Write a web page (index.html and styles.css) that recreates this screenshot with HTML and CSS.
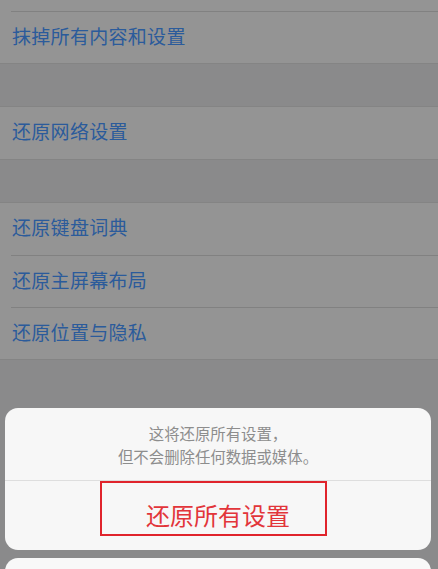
FILE: index.html
```html
<!DOCTYPE html>
<html lang="zh-CN">
<head>
<meta charset="utf-8">
<title>还原</title>
<link rel="stylesheet" href="styles.css">
</head>
<body>
<div class="screen">
  <div class="group">
    <div class="row row-top"></div>
    <div class="row"><span class="label">抹掉所有内容和设置</span></div>
  </div>
  <div class="gap"></div>
  <div class="group">
    <div class="row"><span class="label">还原网络设置</span></div>
  </div>
  <div class="gap"></div>
  <div class="group">
    <div class="row"><span class="label">还原键盘词典</span></div>
    <div class="row"><span class="label">还原主屏幕布局</span></div>
    <div class="row"><span class="label">还原位置与隐私</span></div>
  </div>

  <div class="sheet">
    <div class="card">
      <div class="sheet-msg">这将还原所有设置，<br>但不会删除任何数据或媒体。</div>
      <div class="sheet-btn">
        <span class="destructive">还原所有设置</span>
        <span class="annot"></span>
      </div>
    </div>
    <div class="card cancel"></div>
  </div>
</div>
</body>
</html>
```
FILE: styles.css
```css
html, body {
  margin: 0;
  padding: 0;
  background: #8a8a8b;
}
.screen {
  width: 438px;
  height: 569px;
  overflow: hidden;
  background: #8a8a8b;
  font-family: "Noto Sans CJK SC", "Noto Sans", sans-serif;
}
.group {
  background: #949494;
  border-top: 1px solid #848484;
  border-bottom: 1px solid #848484;
}
.group:first-child {
  border-top: none;
}
.row {
  height: 52px;
  display: flex;
  align-items: center;
  padding-left: 12px;
  position: relative;
}
.row + .row {
  height: 51px;
  border-top: 1px solid transparent;
}
.row + .row::before {
  content: "";
  position: absolute;
  left: 11px;
  right: 0;
  top: -1px;
  height: 1px;
  background: #818181;
}
.row-top {
  height: 11px;
}
.label {
  color: #2b5b9b;
  font-size: 19px;
  line-height: 1;
  letter-spacing: 0.3px;
  margin-bottom: 5px;
}
.gap {
  height: 42px;
}
.sheet {
  margin-top: 48px;
  padding: 0 7px 0 5px;
  display: flex;
  flex-direction: column;
  gap: 8px;
}
.card {
  background: #f7f7f7;
  border-radius: 13px;
  overflow: hidden;
}
.sheet-msg {
  height: 73px;
  box-sizing: border-box;
  padding-top: 14px;
  text-align: center;
  color: #8d8d8d;
  font-size: 15.4px;
  line-height: 23px;
  border-bottom: 1px solid #dedede;
}
.sheet-btn {
  height: 69px;
  display: flex;
  align-items: center;
  justify-content: center;
  position: relative;
}
.destructive {
  color: #e2353a;
  font-size: 24px;
  line-height: 1;
  margin-bottom: 1px;
}
.annot {
  position: absolute;
  left: 95px;
  top: 0;
  width: 223px;
  height: 51px;
  border: 2px solid #e0242c;
}
.cancel {
  height: 60px;
  background: #f8f8f8;
}
```
